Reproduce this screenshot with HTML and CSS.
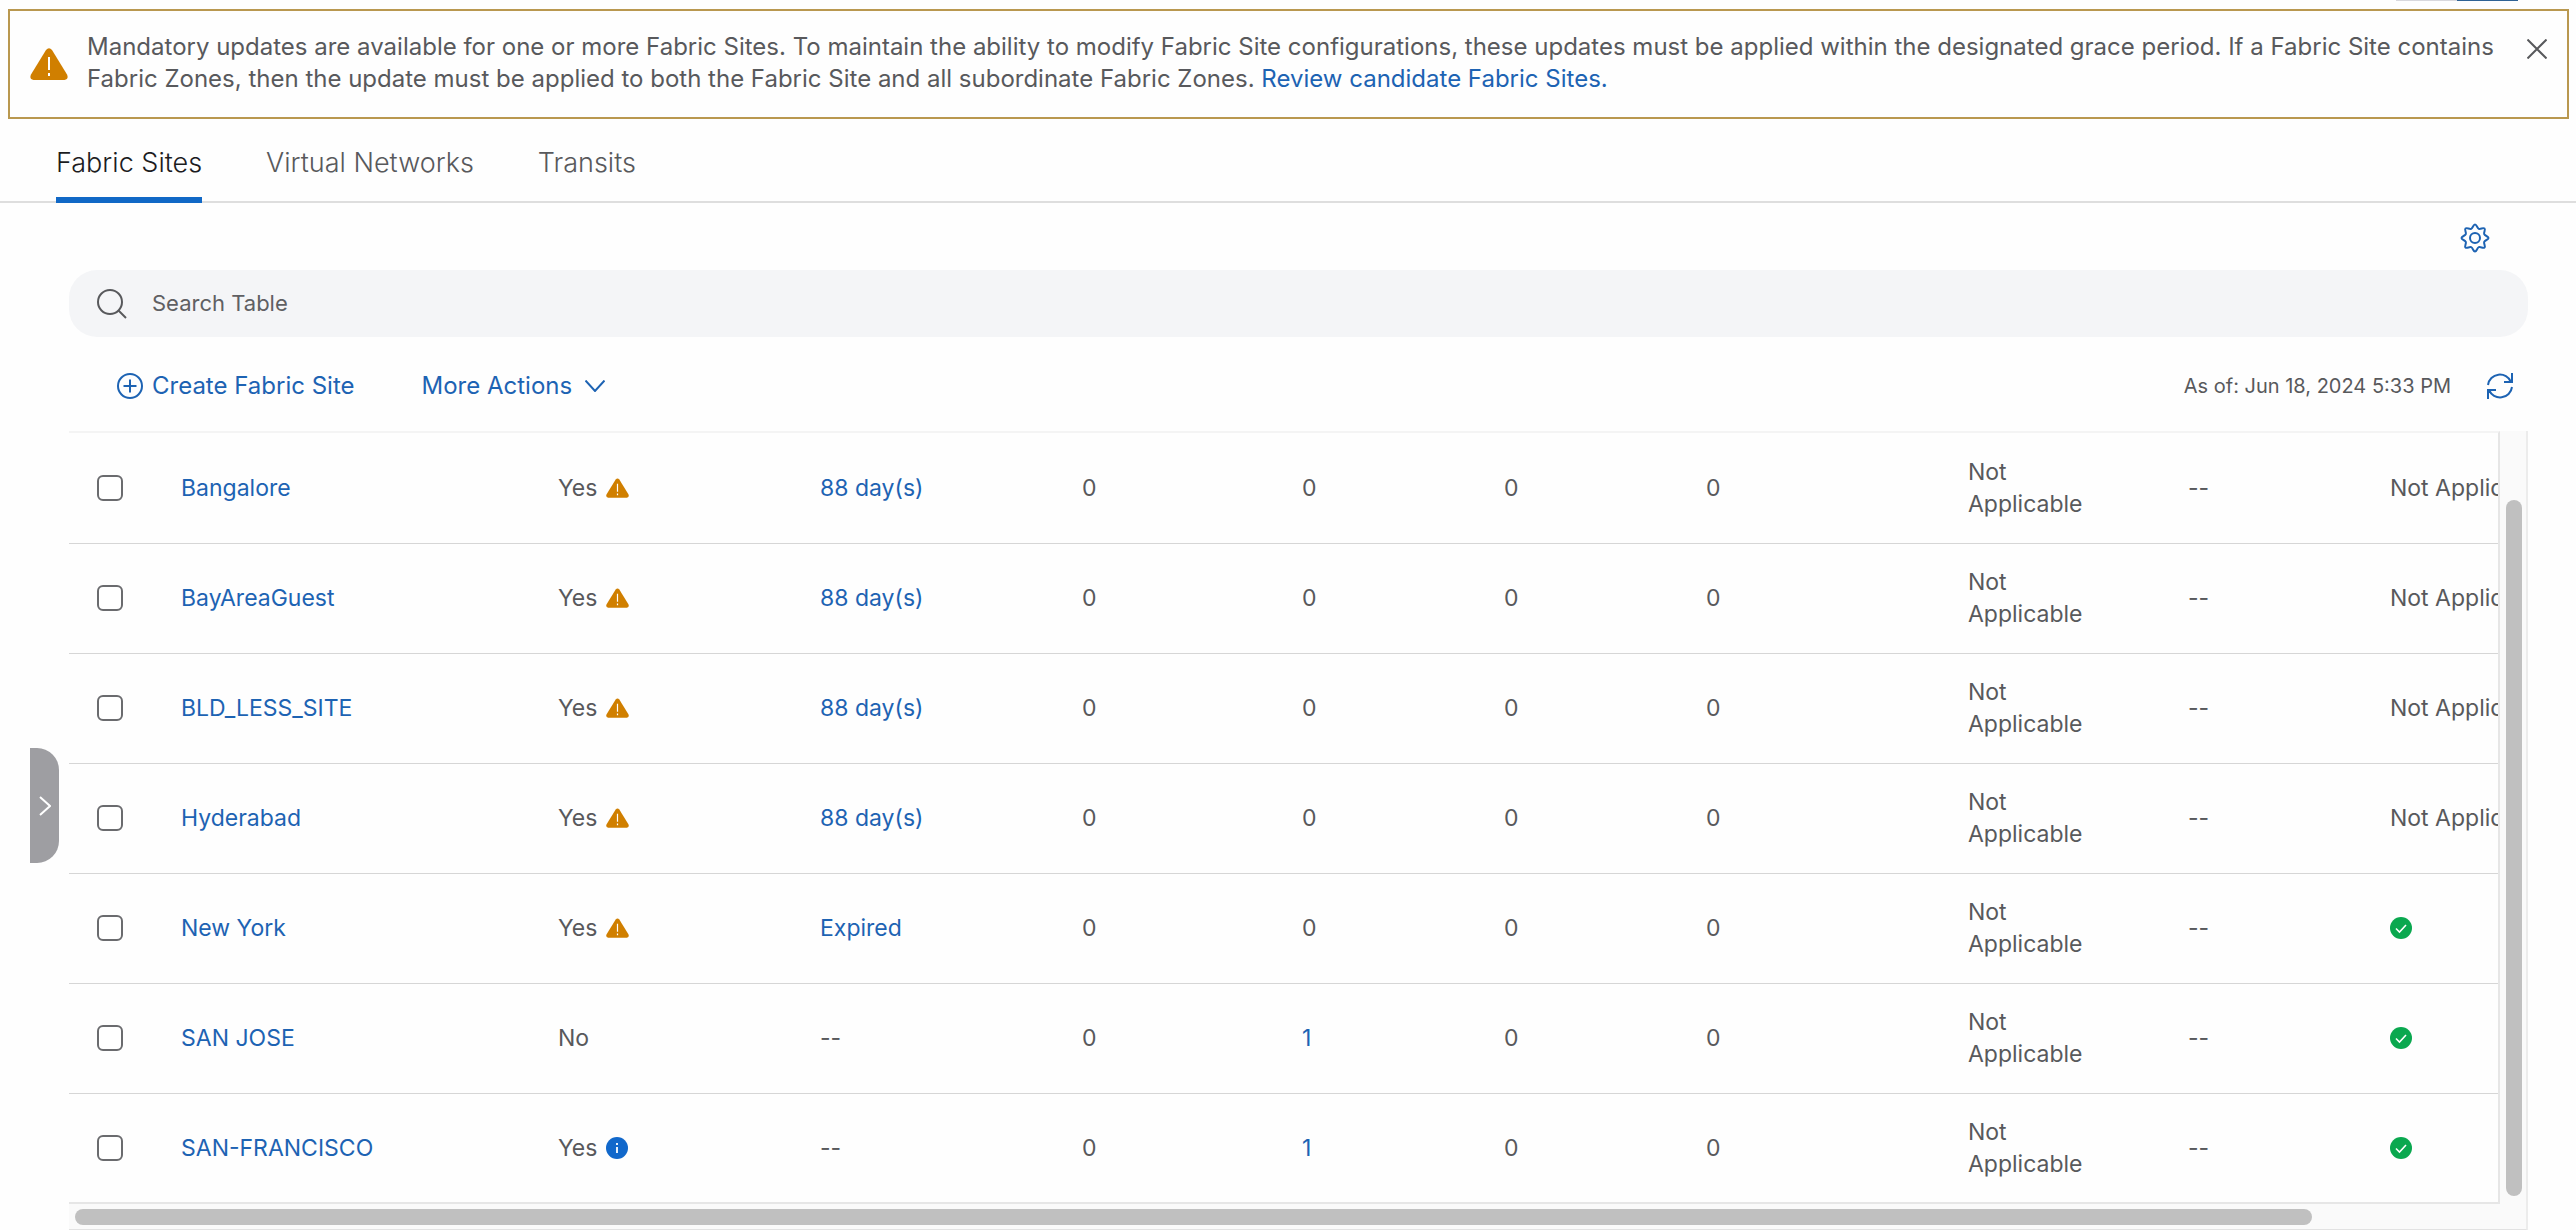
FILE: index.html
```
<!DOCTYPE html>
<html lang="en">
  <head>
    <meta charset="UTF-8" />
    <meta name="viewport" content="width=device-width, initial-scale=1.0" />
    <title>Fabric Sites</title>
    <link rel="stylesheet" href="styles.css">
  </head>
  <body>
    <!-- shared icons -->
    <svg class="sprite" aria-hidden="true">
      <symbol id="warning" viewBox="0 0 38 32">
        <path d="M16 2Q19 -1.500 22 2L37 26.500Q39 31 34.500 32H3.500Q-1 31 1 26.500Z" fill="#d07f00" />
        <path d="M19 9V22M19 25V28" stroke="#fff" stroke-width="2" />
      </symbol>
      <symbol id="check" viewBox="0 0 22 22">
        <circle cx="11" cy="11" r="11" fill="#0aa84f" />
        <path d="M6 11.500L9.500 15L16 8" fill="none" stroke="#fff" stroke-width="1.600" />
      </symbol>
      <symbol id="info" viewBox="0 0 22 22">
        <circle cx="11" cy="11" r="11" fill="#1168cb" />
        <path d="M11 6V8M11 10V16" stroke="#fff" stroke-width="1.800" />
      </symbol>
    </svg>

    <div class="toggle-edge"><span></span><span class="on"></span></div>

    <div class="banner" role="alert">
      <svg class="banner-icon" role="img" aria-label="Warning"><use href="#warning" /></svg>
      <p>
        Mandatory updates are available for one or more Fabric Sites. To maintain the ability to modify Fabric Site configurations, these updates must be applied within the designated grace period. If a Fabric Site contains Fabric Zones, then the update must be applied to both the Fabric Site and all subordinate Fabric Zones.
        <a href="#">Review candidate Fabric Sites.</a>
      </p>
      <button type="button" class="close" aria-label="Close">
        <svg width="20" height="20" viewBox="0 0 20 20"><path d="M0.500 0.500L19.500 19.500M19.500 0.500L0.500 19.500" /></svg>
      </button>
    </div>

    <nav class="tabs">
      <a href="#" class="active">Fabric Sites</a>
      <a href="#">Virtual Networks</a>
      <a href="#">Transits</a>
    </nav>

    <main class="content">
      <button type="button" class="handle" aria-label="Expand panel">
        <svg width="12" height="20" viewBox="0 0 12 20"><path d="M1 1L11 10L1 19" /></svg>
      </button>

      <div class="settings">
        <button type="button" aria-label="Settings">
          <svg width="30" height="30" viewBox="0 0 30 30">
            <path id="teeth" d="M15 1.500C16.800 1.500 17 5.050 18.800 5.800C20.600 6.550 23.200 4.200 24.500 5.500C25.800 6.800 23.450 9.400 24.200 11.200C24.950 13 28.500 13.200 28.500 15" />
            <use href="#teeth" transform="rotate(90 15 15)" />
            <use href="#teeth" transform="rotate(180 15 15)" />
            <use href="#teeth" transform="rotate(270 15 15)" />
            <circle cx="15" cy="15" r="5" />
          </svg>
        </button>
      </div>

      <label class="search">
        <svg width="30" height="30" viewBox="0 0 30 30"><circle cx="13" cy="13" r="12" /><path d="M21.500 21.500L29 29" /></svg>
        <input type="text" placeholder="Search Table" aria-label="Search Table" />
      </label>

      <div class="toolbar">
        <button type="button">
          <svg width="26" height="26" viewBox="0 0 26 26"><circle cx="13" cy="13" r="12" /><path d="M13 6.500V19.500M6.500 13H19.500" /></svg>
          Create Fabric Site
        </button>
        <button type="button" class="more">
          More Actions
          <svg width="20" height="12" viewBox="0 0 20 12"><path d="M0.500 0.500L10 11L19.500 0.500" /></svg>
        </button>
        <span class="as-of">As of: Jun 18, 2024 5:33 PM</span>
        <button type="button" aria-label="Refresh">
          <svg width="26" height="26" viewBox="0 0 26 26"><path d="M1 12A12 12 0 0 1 24 9M25 0V9H17M25 14A12 12 0 0 1 2 17M1 26V17H9" /></svg>
        </button>
      </div>

      <div class="grid">
        <div class="viewport">
          <table>
            <colgroup>
              <col class="c-check" /><col class="c-name" /><col class="c-wide" /><col class="c-wide" />
              <col class="c-num" /><col class="c-slim" /><col class="c-slim" /><col class="c-wide" />
              <col class="c-num" /><col class="c-slim" /><col />
            </colgroup>
            <tbody>
              <tr>
                <td><input type="checkbox" aria-label="Bangalore" /></td>
                <td><a href="#">Bangalore</a></td>
                <td><span class="flag">Yes <svg class="warn"><use href="#warning" /></svg></span></td>
                <td><a href="#">88 day(s)</a></td>
                <td>0</td><td>0</td><td>0</td><td>0</td>
                <td>Not Applicable</td><td>--</td><td class="health">Not Applicable</td>
              </tr>
              <tr>
                <td><input type="checkbox" aria-label="BayAreaGuest" /></td>
                <td><a href="#">BayAreaGuest</a></td>
                <td><span class="flag">Yes <svg class="warn"><use href="#warning" /></svg></span></td>
                <td><a href="#">88 day(s)</a></td>
                <td>0</td><td>0</td><td>0</td><td>0</td>
                <td>Not Applicable</td><td>--</td><td class="health">Not Applicable</td>
              </tr>
              <tr>
                <td><input type="checkbox" aria-label="BLD_LESS_SITE" /></td>
                <td><a href="#">BLD_LESS_SITE</a></td>
                <td><span class="flag">Yes <svg class="warn"><use href="#warning" /></svg></span></td>
                <td><a href="#">88 day(s)</a></td>
                <td>0</td><td>0</td><td>0</td><td>0</td>
                <td>Not Applicable</td><td>--</td><td class="health">Not Applicable</td>
              </tr>
              <tr>
                <td><input type="checkbox" aria-label="Hyderabad" /></td>
                <td><a href="#">Hyderabad</a></td>
                <td><span class="flag">Yes <svg class="warn"><use href="#warning" /></svg></span></td>
                <td><a href="#">88 day(s)</a></td>
                <td>0</td><td>0</td><td>0</td><td>0</td>
                <td>Not Applicable</td><td>--</td><td class="health">Not Applicable</td>
              </tr>
              <tr>
                <td><input type="checkbox" aria-label="New York" /></td>
                <td><a href="#">New York</a></td>
                <td><span class="flag">Yes <svg class="warn"><use href="#warning" /></svg></span></td>
                <td><a href="#">Expired</a></td>
                <td>0</td><td>0</td><td>0</td><td>0</td>
                <td>Not Applicable</td><td>--</td>
                <td class="health"><svg class="dot"><use href="#check" /></svg></td>
              </tr>
              <tr>
                <td><input type="checkbox" aria-label="SAN JOSE" /></td>
                <td><a href="#">SAN JOSE</a></td>
                <td>No</td>
                <td>--</td>
                <td>0</td><td><a href="#">1</a></td><td>0</td><td>0</td>
                <td>Not Applicable</td><td>--</td>
                <td class="health"><svg class="dot"><use href="#check" /></svg></td>
              </tr>
              <tr>
                <td><input type="checkbox" aria-label="SAN-FRANCISCO" /></td>
                <td><a href="#">SAN-FRANCISCO</a></td>
                <td><span class="flag">Yes <svg class="dot"><use href="#info" /></svg></span></td>
                <td>--</td>
                <td>0</td><td><a href="#">1</a></td><td>0</td><td>0</td>
                <td>Not Applicable</td><td>--</td>
                <td class="health"><svg class="dot"><use href="#check" /></svg></td>
              </tr>
            </tbody>
          </table>
        </div>
        <div class="track-y"><div class="thumb-y"></div></div>
        <div class="track-x"><div class="thumb-x"></div></div>
      </div>
    </main>
  </body>
</html>
```
FILE: styles.css
```
* {
  box-sizing: border-box;
}

body {
  margin: 0;
  background: #fefefe;
  color: #58595c;
  font-family: Inter, "Liberation Sans", Arial, sans-serif;
  font-size: 23px;
  line-height: 32px;
}

a {
  color: #1d63b3;
  text-decoration: none;
}

button {
  display: flex;
  align-items: center;
  padding: 0;
  border: none;
  background: none;
  color: #1d63b3;
  font: inherit;
  cursor: pointer;
}

svg {
  flex: none;
  fill: none;
  stroke: #1d63b3;
  stroke-width: 2;
}

.sprite {
  position: absolute;
  width: 0;
  height: 0;
}

symbol,
.banner-icon,
.warn,
.dot {
  stroke: none;
}

/* bottom edge of the view switch above the banner */
.toggle-edge {
  display: flex;
  justify-content: flex-end;
  height: 1px;
  padding-right: 58px;
}

.toggle-edge span {
  width: 61px;
  background: #d8d8dd;
}

.toggle-edge .on {
  background: #2f6294;
}

.banner {
  display: flex;
  align-items: flex-start;
  margin: 8px 7px 0 8px;
  padding: 20px 20px 22px;
  border: 2px solid #b9984f;
}

.banner-icon {
  width: 38px;
  height: 32px;
  margin-top: 17px;
}

.banner p {
  flex: 1;
  margin: 0 24px 0 19px;
  font-size: 24px;
}

.close {
  margin-top: 8px;
}

.close svg {
  stroke: #58595c;
}

.tabs {
  display: flex;
  gap: 64px;
  padding: 24px 56px 0;
  border-bottom: 2px solid #dedede;
}

.tabs a {
  margin-bottom: -2px;
  padding: 4px 0 18px;
  border-bottom: 6px solid transparent;
  color: #58595c;
  font-size: 27px;
  font-weight: 300;
}

.tabs .active {
  border-color: #1168c6;
  color: #1c1c1e;
}

.content {
  position: relative;
  padding: 20px 48px 0 69px;
}

.handle {
  position: absolute;
  top: 545px;
  left: 30px;
  justify-content: center;
  width: 29px;
  height: 115px;
  border-radius: 0 22px 22px 0;
  background: #9e9ea2;
}

.handle svg {
  stroke: #fff;
}

.settings {
  display: flex;
  justify-content: flex-end;
  padding-right: 38px;
}

.search {
  display: flex;
  align-items: center;
  gap: 25px;
  height: 67px;
  margin-top: 17px;
  padding: 0 28px;
  border-radius: 28px;
  background: #f4f5f7;
}

.search svg {
  stroke: #58595c;
}

.search input {
  flex: 1;
  padding: 0 0 2px;
  border: none;
  outline: none;
  background: none;
  color: #58595c;
  font: inherit;
  font-size: 22px;
}

.search input::placeholder {
  color: #5f6063;
  opacity: 1;
}

.toolbar {
  display: flex;
  align-items: center;
  height: 94px;
  padding: 4px 15px 0 48px;
}

.toolbar button {
  gap: 9px;
  font-size: 24px;
}

.toolbar .more {
  gap: 13px;
  margin-left: 67px;
}

.as-of {
  margin: 0 36px 0 auto;
  font-size: 20px;
}

.grid {
  display: grid;
  grid-template-columns: minmax(0, 1fr) 26px;
  border-right: 2px solid #ececec;
  border-bottom: 2px solid #e2e2e2;
  background: #fafafa;
}

.viewport {
  overflow: hidden;
  border-top: 2px solid #f4f4f4;
  border-right: 2px solid #e6e6e6;
  border-bottom: 2px solid #e6e6e6;
  background: #fefefe;
}

table {
  width: 2640px;
  table-layout: fixed;
  border-collapse: collapse;
}

.c-check { width: 112px; }
.c-name { width: 377px; }
.c-wide { width: 262px; }
.c-num { width: 220px; }
.c-slim { width: 202px; }

td {
  height: 110px;
  padding: 0 80px 0 0;
  border-bottom: 1px solid #d6d6d6;
}

tr:last-child td {
  height: 109px;
  border-bottom: none;
}

td:first-child {
  padding: 0 0 0 28px;
}

td:nth-child(2),
.health {
  white-space: nowrap;
}

input[type="checkbox"] {
  display: block;
  width: 26px;
  height: 26px;
  margin: 0;
  border: 2px solid #6a6b6e;
  border-radius: 6px;
  appearance: none;
  background: #fff;
}

.flag {
  display: flex;
  align-items: center;
  gap: 9px;
}

.warn {
  width: 23px;
  height: 20px;
}

.dot {
  display: block;
  width: 22px;
  height: 22px;
}

.track-y {
  padding: 69px 4px 8px 6px;
}

.thumb-y {
  width: 16px;
  height: 100%;
  border-radius: 8px;
  background: #c0c0c0;
}

.track-x {
  grid-column: 1 / -1;
  padding: 5px 6px 4px;
}

.thumb-x {
  width: 91.5%;
  height: 16px;
  border-radius: 8px;
  background: #c0c0c0;
}
```
